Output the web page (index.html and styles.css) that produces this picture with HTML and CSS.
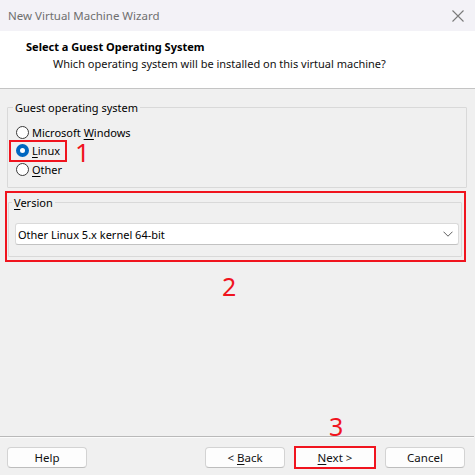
FILE: index.html
```html
<!DOCTYPE html>
<html lang="en">
<head>
<meta charset="utf-8">
<title>New Virtual Machine Wizard</title>
<link rel="stylesheet" href="styles.css">
</head>
<body>
  <div class="titlebar">
    <span class="title">New Virtual Machine Wizard</span>
    <svg class="close" width="12" height="12" viewBox="0 0 12 12"><path d="M0.5 0.5 L11.5 11.5 M11.5 0.5 L0.5 11.5" stroke="#7a7a7a" stroke-width="1.1" fill="none"/></svg>
  </div>
  <div class="header">
    <div class="h-title">Select a Guest Operating System</div>
    <div class="h-sub">Which operating system will be installed on this virtual machine?</div>
  </div>
  <div class="main">
    <fieldset class="group os">
      <legend>Guest operating system</legend>
      <div class="radios">
        <div class="row"><span class="radio"></span><span class="lbl">Microsoft <u>W</u>indows</span></div>
        <div class="row"><span class="mark"><span class="radio on"></span><span class="lbl"><u>L</u>inux</span></span><span class="num n1">1</span></div>
        <div class="row"><span class="radio"></span><span class="lbl"><u>O</u>ther</span></div>
      </div>
    </fieldset>
    <div class="redbox">
      <fieldset class="group ver">
        <legend><u>V</u>ersion</legend>
        <div class="select">
          <span>Other Linux 5.x kernel 64-bit</span>
          <svg width="10" height="6" viewBox="0 0 10 6"><path d="M0.5 0.7 L5 5.2 L9.5 0.7" stroke="#5f5f5f" stroke-width="1" fill="none"/></svg>
        </div>
      </fieldset>
    </div>
    <div class="num n2">2</div>
  </div>
  <div class="footer">
    <div class="num n3">3</div>
    <div class="sep"></div>
    <div class="buttons">
      <div class="btn"><span>Help</span></div>
      <div class="spacer"></div>
      <div class="btn"><span>&lt; <u>B</u>ack</span></div>
      <div class="btn next"><span><u>N</u>ext &gt;</span></div>
      <div class="btn"><span>Cancel</span></div>
    </div>
  </div>
</body>
</html>
```

FILE: styles.css
```css
* { box-sizing: border-box; }
html, body { margin: 0; padding: 0; }
body {
  width: 475px;
  height: 475px;
  overflow: hidden;
  display: flex;
  flex-direction: column;
  background: #f0f0f0;
  font-family: "Noto Sans", "Open Sans", sans-serif;
  font-size: 11px;
  color: #000;
}
u { text-decoration-thickness: 1px; text-underline-offset: 2px; }

.titlebar {
  height: 31px;
  flex: none;
  background: #f3f2f7;
  display: flex;
  align-items: center;
  justify-content: space-between;
  padding: 0 11px 0 8px;
  color: #6f6f6f;
  font-size: 11.5px;
}

.header {
  flex: none;
  height: 58px;
  background: #fff;
  border-bottom: 1px solid #c4c4c4;
  padding: 8px 0 0 26px;
  line-height: 15px;
}
.h-title { font-weight: 700; }
.h-sub { margin: 2px 0 0 27px; color: #111; }

.main {
  flex: 1;
  padding: 0 8px 0 7px;
  display: flex;
  flex-direction: column;
}

.group {
  margin: 0;
  border: 1px solid #d9d9d9;
  border-radius: 1px;
  min-width: 0;
}
.group legend {
  padding: 0 2px;
  margin-left: -3px;
  line-height: 15px;
}

.os {
  margin-top: 11px;
  padding: 0 0 8.5px 8px;
}
.radios { margin-top: 8px; display: flex; flex-direction: column; }
.row {
  height: 18.5px;
  display: flex;
  align-items: center;
}
.mark {
  display: flex;
  align-items: center;
  height: 18px;
  padding: 0 5px;
  margin: 0 -5px;
  outline: 2px solid #f0141e;
}
.radio {
  width: 13px;
  height: 13px;
  border-radius: 50%;
  border: 1px solid #3a3a3a;
  background: #fff;
  flex: none;
  margin-right: 3px;
}
.radio.on {
  border: 4px solid #0067c0;
  background: #fff;
}

.num {
  color: #f0141e;
  font-size: 25px;
  line-height: 20px;
}
.n1 { margin-left: 15px; margin-top: 3px; font-size: 26px; line-height: 14px; }
.n2 { padding-left: 215px; margin-top: 14px; }

.redbox {
  margin: 3px 0 0 -2px;
  width: 461px;
  border: 2px solid #f0141e;
  padding: 2px 2px 3px 1px;
}
.ver {
  padding: 0 3px 11px 6px;
}
.select {
  margin-top: 13px;
  height: 22px;
  width: 444px;
  background: #fff;
  border: 1px solid #dadada;
  border-bottom-color: #c2c2c2;
  border-radius: 3px;
  display: flex;
  align-items: center;
  justify-content: space-between;
  padding: 0 5px 0 2px;
}

.footer { flex: none; }
.n3 { padding-left: 329px; height: 20px; }
.sep {
  height: 2px;
  border-top: 1px solid #b9b9b9;
  border-bottom: 1px solid #fbfbfb;
  margin-right: 1px;
}
.buttons {
  display: flex;
  gap: 10px;
  padding: 9px 10px 7px 7px;
}
.spacer { flex: 1; }
.btn {
  width: 80px;
  height: 21px;
  background: #fdfdfd;
  border: 1px solid #d3d3d3;
  border-bottom-color: #bdbdbd;
  border-radius: 4px;
  display: flex;
  align-items: center;
  justify-content: center;
  font-size: 11.5px;
  color: #111;
}
.next {
  border-color: transparent;
  outline: 2px solid #f0141e;
  outline-offset: -1px;
  border-radius: 0;
}
```
